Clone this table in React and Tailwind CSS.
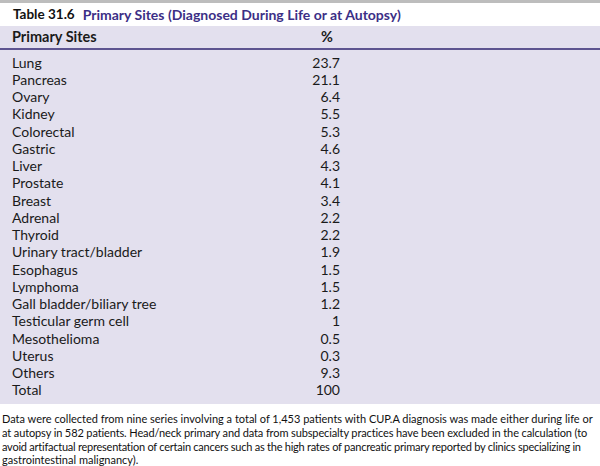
const rows = [
  ["Lung", "23.7"],
  ["Pancreas", "21.1"],
  ["Ovary", "6.4"],
  ["Kidney", "5.5"],
  ["Colorectal", "5.3"],
  ["Gastric", "4.6"],
  ["Liver", "4.3"],
  ["Prostate", "4.1"],
  ["Breast", "3.4"],
  ["Adrenal", "2.2"],
  ["Thyroid", "2.2"],
  ["Urinary tract/bladder", "1.9"],
  ["Esophagus", "1.5"],
  ["Lymphoma", "1.5"],
  ["Gall bladder/biliary tree", "1.2"],
  ["Testicular germ cell", "1"],
  ["Mesothelioma", "0.5"],
  ["Uterus", "0.3"],
  ["Others", "9.3"],
  ["Total", "100"],
]

export default function App() {
  return (
    <div className="w-[600px] h-[466px] bg-white overflow-hidden font-['Lato','Open_Sans',sans-serif] text-[#1a1a1a]">
      <div className="h-[3px] bg-[#bdbdbd]" />
      <div className="h-[23px] flex items-center gap-[8px] pl-[13px] text-[13.5px] font-bold">
        <span className="text-[#111]">Table 31.6</span>
        <span className="text-[#3c2f86] text-[14px]">Primary Sites (Diagnosed During Life or at Autopsy)</span>
      </div>
      <div className="bg-[#e3e0ee] pb-[5px]">
        <div className="h-[24px] flex items-center text-[14.5px] font-bold border-b-2 border-[#5d5490]">
          <span className="pl-[12px] w-[312px]">Primary Sites</span>
          <span className="w-[30px] text-center">%</span>
        </div>
        <div className="pt-[4px]">
          {rows.map(([name, val]) => (
            <div key={name} className="h-[17.25px] flex items-center text-[14px] leading-none">
              <span className="pl-[12px] w-[300px]">{name}</span>
              <span className="w-[40px] text-right">{val}</span>
            </div>
          ))}
        </div>
      </div>
      <div className="px-[2px] pt-[8px] text-[11px] leading-[13.8px] text-[#111]">
        <div className="whitespace-nowrap">
          Data were collected from nine series involving a total of 1,453 patients with CUP.A diagnosis was made either during life or
        </div>
        <div className="whitespace-nowrap tracking-[-0.12px]">
          at autopsy in 582 patients. Head/neck primary and data from subspecialty practices have been excluded in the calculation (to
        </div>
        <div className="whitespace-nowrap tracking-[-0.24px]">
          avoid artifactual representation of certain cancers such as the high rates of pancreatic primary reported by clinics specializing in
        </div>
        <div className="whitespace-nowrap">gastrointestinal malignancy).</div>
      </div>
    </div>
  )
}
